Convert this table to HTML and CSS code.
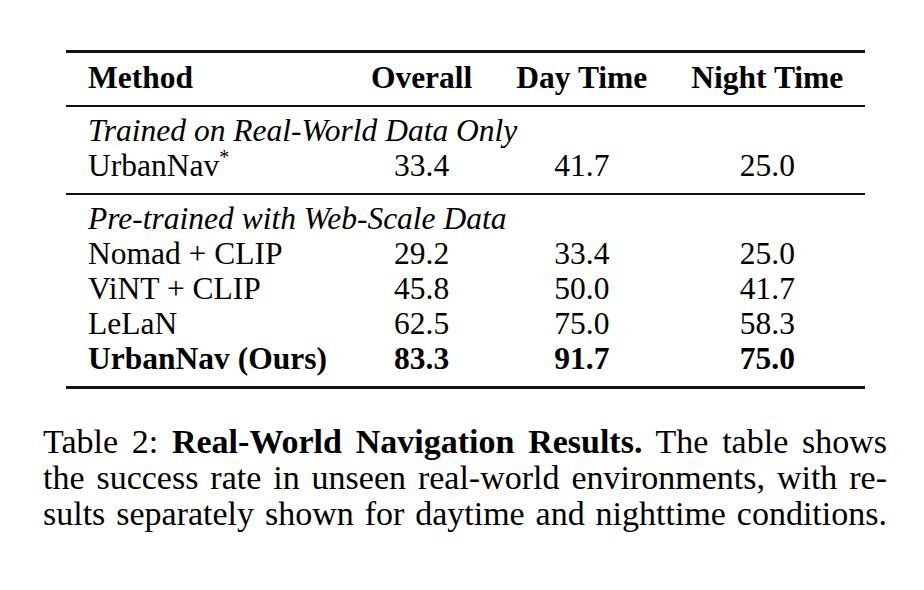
FILE: index.html
```html
<!DOCTYPE html>
<html>
<head>
<meta charset="utf-8">
<link rel="stylesheet" href="styles.css">
</head>
<body>
<div class="page">
  <table class="results">
    <thead>
      <tr class="head">
        <th class="method">Method</th>
        <th>Overall</th>
        <th>Day Time</th>
        <th>Night Time</th>
      </tr>
    </thead>
    <tbody class="group">
      <tr class="label"><td colspan="4">Trained on Real-World Data Only</td></tr>
      <tr class="last"><td class="method">UrbanNav<sup>*</sup></td><td>33.4</td><td>41.7</td><td>25.0</td></tr>
    </tbody>
    <tbody class="group">
      <tr class="label"><td colspan="4">Pre-trained with Web-Scale Data</td></tr>
      <tr><td class="method">Nomad + CLIP</td><td>29.2</td><td>33.4</td><td>25.0</td></tr>
      <tr><td class="method">ViNT + CLIP</td><td>45.8</td><td>50.0</td><td>41.7</td></tr>
      <tr><td class="method">LeLaN</td><td>62.5</td><td>75.0</td><td>58.3</td></tr>
      <tr class="best last"><td class="method">UrbanNav (Ours)</td><td>83.3</td><td>91.7</td><td>75.0</td></tr>
    </tbody>
  </table>
  <p class="caption">
    <span class="line">Table 2: <b>Real-World Navigation Results.</b> The table shows</span>
    <span class="line">the success rate in unseen real-world environments, with re-</span>
    <span class="line">sults separately shown for daytime and nighttime conditions.</span>
  </p>
</div>
</body>
</html>
```
FILE: styles.css
```css
html, body {
  margin: 0;
  padding: 0;
  background: #fff;
}
body {
  font-family: "Liberation Serif", "Times New Roman", serif;
  color: #000;
}
.page {
  width: 924px;
  height: 590px;
  padding-top: 50px;
  box-sizing: border-box;
}
.results {
  margin-left: 66px;
  border-collapse: collapse;
  font-size: 31.5px;
  line-height: 35px;
  border-top: 3px solid #111;
  border-bottom: 3px solid #111;
}
.results th,
.results td {
  padding: 0 22px;
  text-align: center;
  white-space: nowrap;
}
.results .method {
  text-align: left;
}
.results th {
  font-weight: bold;
}
.head th {
  padding-top: 7px;
  padding-bottom: 10px;
}
.group {
  border-top: 2px solid #111;
}
.label td {
  font-style: italic;
  text-align: left;
  padding-top: 6px;
}
.group .last td {
  padding-bottom: 10px;
}
.best td {
  font-weight: bold;
}
sup {
  font-size: 20px;
  line-height: 0;
  vertical-align: 12px;
}
.caption {
  margin: 35px 0 0 43px;
  width: 844px;
  font-size: 34px;
  line-height: 36px;
}
.caption .line {
  display: block;
  white-space: nowrap;
  text-align: justify;
  text-align-last: justify;
}
```
